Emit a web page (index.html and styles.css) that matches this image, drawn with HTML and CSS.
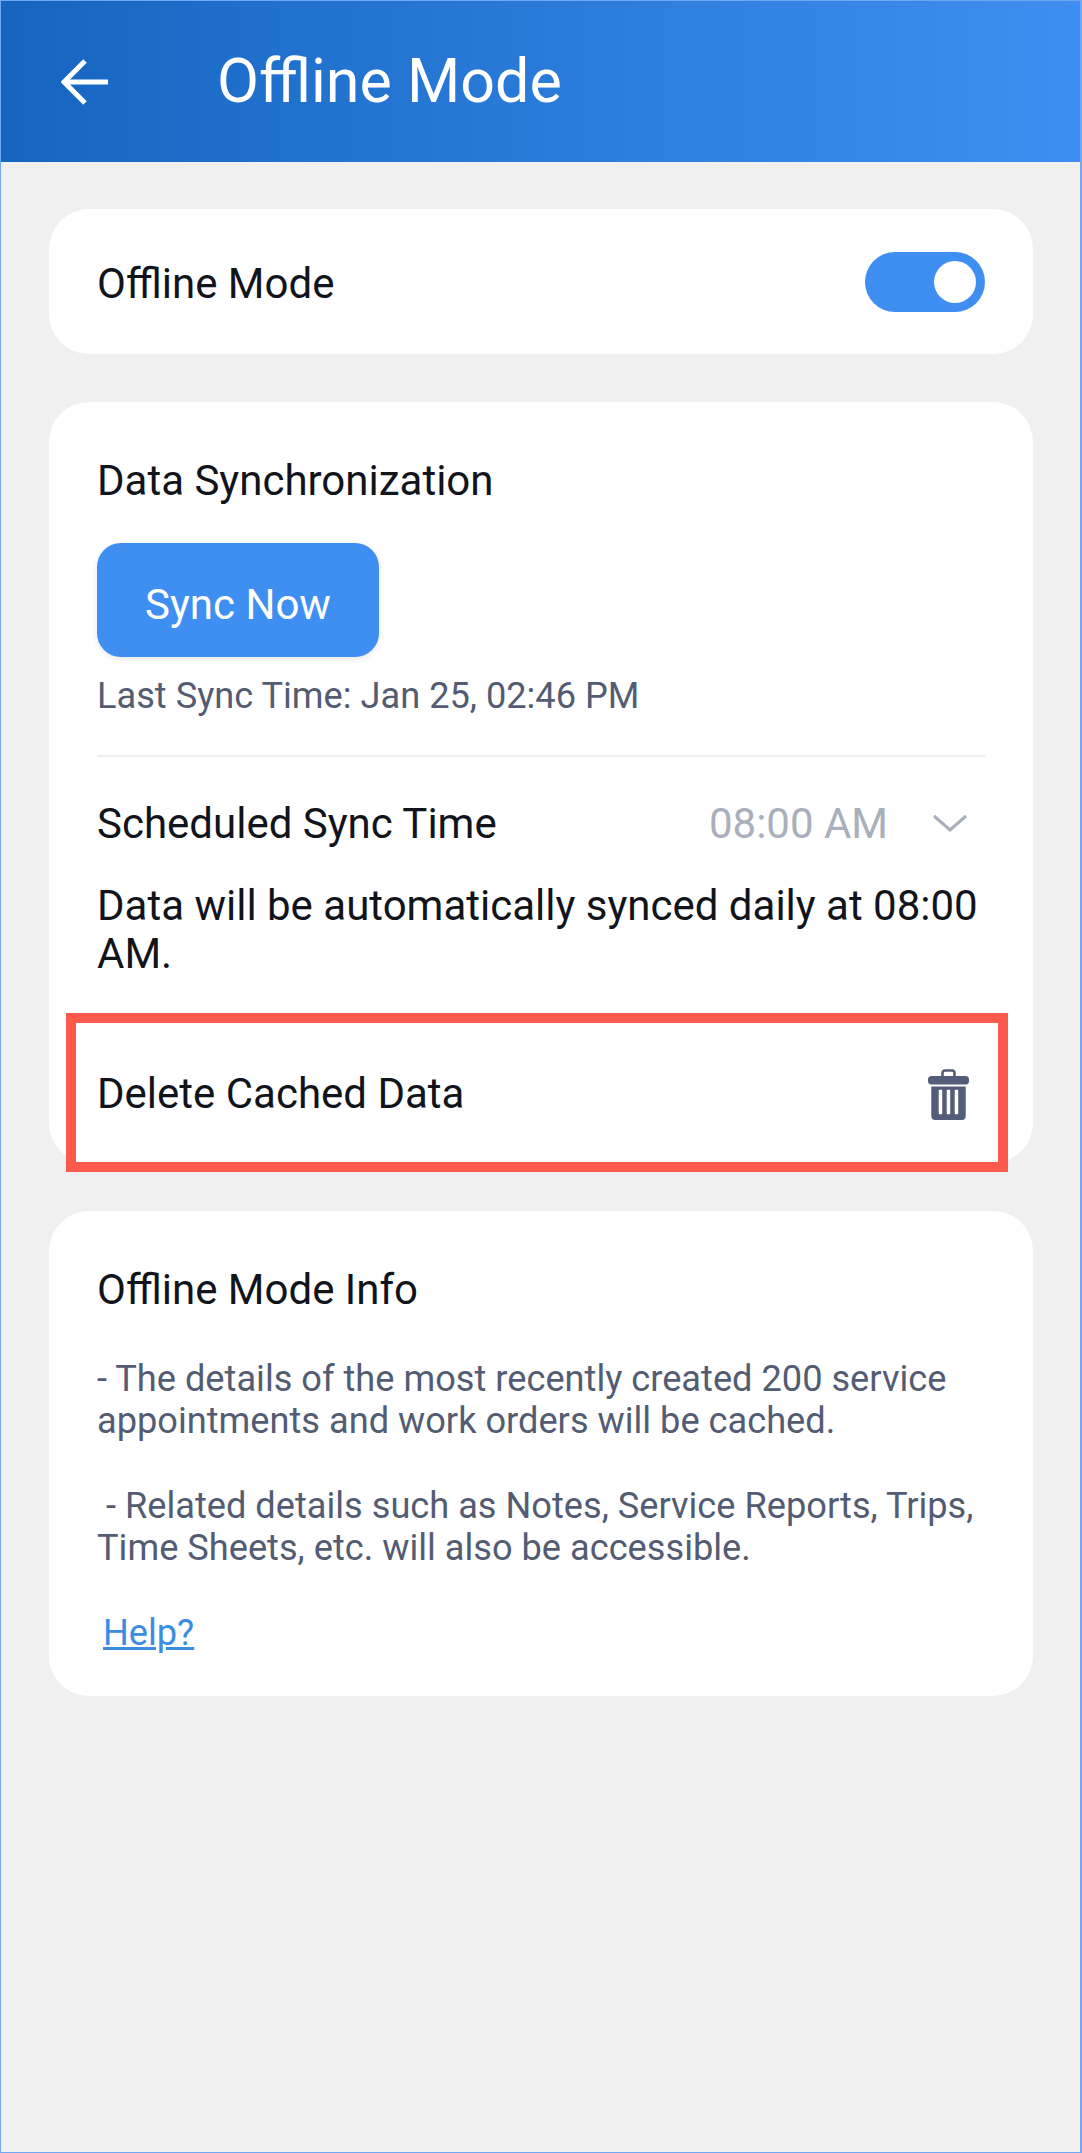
FILE: index.html
```html
<!DOCTYPE html>
<html>
<head>
  <meta charset="utf-8">
  <title>Offline Mode</title>
  <link rel="stylesheet" href="styles.css">
</head>
<body>
  <div class="screen">
    <header class="topbar">
      <svg class="back-icon" width="48" height="46" viewBox="0 0 48 46">
        <path d="M47 23H3M24 2L3 23L24 44" fill="none" stroke="#fff" stroke-width="5"/>
      </svg>
      <h1 class="topbar-title">Offline Mode</h1>
    </header>

    <main class="content">
      <section class="card toggle-card">
        <span class="label">Offline Mode</span>
        <span class="toggle"><span class="toggle-knob"></span></span>
      </section>

      <section class="card sync-card">
        <div class="label">Data Synchronization</div>
        <button class="sync-btn">Sync Now</button>
        <div class="last-sync">Last Sync Time: Jan 25, 02:46 PM</div>
        <div class="divider"></div>
        <div class="schedule-row">
          <span class="label">Scheduled Sync Time</span>
          <span class="schedule-time">08:00 AM</span>
          <svg class="chevron" width="36" height="19" viewBox="0 0 36 19">
            <path d="M2 2L18 16L34 2" fill="none" stroke="#a9afbb" stroke-width="3"/>
          </svg>
        </div>
        <p class="schedule-note">Data will be automatically synced daily at 08:00 AM.</p>
        <div class="delete-row">
          <span class="label">Delete Cached Data</span>
          <svg class="trash" width="41" height="51" viewBox="0 0 41 51">
            <path d="M14.5 8V4a2.5 2.5 0 0 1 2.5-2.5h7A2.5 2.5 0 0 1 26.500 4v4" fill="none" stroke="#535c78" stroke-width="2.6"/>
            <rect x="0" y="7" width="41" height="8.500" rx="3.500" fill="#535c78"/>
            <path d="M3.300 17.500h34.400V47a4 4 0 0 1-4 4H7.300a4 4 0 0 1-4-4z" fill="#535c78"/>
            <rect x="10.700" y="20.700" width="3.500" height="24.500" rx="1" fill="#fff"/>
            <rect x="18.700" y="20.700" width="3.500" height="24.500" rx="1" fill="#fff"/>
            <rect x="26.700" y="20.700" width="3.500" height="24.500" rx="1" fill="#fff"/>
          </svg>
          <div class="highlight"></div>
        </div>
      </section>

      <section class="card info-card">
        <div class="label">Offline Mode Info</div>
        <p class="info-text">- The details of the most recently created 200 service appointments and work orders will be cached.</p>
        <p class="info-text">&nbsp;- Related details such as Notes, Service Reports, Trips, Time Sheets, etc. will also be accessible.</p>
        <a class="help-link" href="#">Help?</a>
      </section>
    </main>
  </div>
</body>
</html>
```

FILE: styles.css
```css
html, body {
  margin: 0;
  padding: 0;
}
body {
  font-family: Roboto, "Liberation Sans", sans-serif;
  color: #12141c;
  background-color: #f0f0f0;
}
.screen {
  box-sizing: border-box;
  height: 2153px;
  border: 1px solid #6fa8f0;
  border-right-width: 2px;
  background-color: #f0f0f0;
  overflow: hidden;
}
.topbar {
  display: flex;
  align-items: center;
  height: 161px;
  padding-left: 60px;
  background: linear-gradient(90deg, #1565c0, #3f8ff2);
}
.topbar-title {
  margin: 0 0 2px 108px;
  font-size: 61px;
  font-weight: 400;
  color: #fff;
}
.content {
  display: flex;
  flex-direction: column;
  gap: 48px;
  padding: 47px 47px 0 48px;
}
.card {
  box-sizing: border-box;
  padding: 0 48px;
  border-radius: 40px;
  background-color: #fff;
}
.label {
  font-size: 42px;
  line-height: 48px;
}
.toggle-card {
  display: flex;
  align-items: center;
  justify-content: space-between;
  height: 145px;
}
.toggle-card .label {
  padding-top: 4px;
}
.toggle {
  display: flex;
  justify-content: flex-end;
  align-items: center;
  box-sizing: border-box;
  width: 120px;
  height: 60px;
  padding-right: 9px;
  border-radius: 30px;
  background-color: #3f8ff2;
}
.toggle-knob {
  width: 42px;
  height: 42px;
  border-radius: 50%;
  background-color: #fff;
}
.sync-card {
  height: 761px;
  padding-top: 55px;
}
.sync-btn {
  display: block;
  width: 282px;
  height: 114px;
  margin-top: 38px;
  padding: 8px 0 0;
  border: none;
  border-radius: 24px;
  font-family: inherit;
  font-size: 42px;
  color: #fff;
  background-color: #3f8ff2;
  box-shadow: 0 2px 6px rgba(0,0,0,0.1);
}
.last-sync {
  margin-top: 19px;
  font-size: 36.2px;
  line-height: 40px;
  color: #535c72;
}
.divider {
  height: 2px;
  margin-top: 39px;
  background-color: #eceef0;
}
.schedule-row {
  display: flex;
  align-items: center;
  margin-top: 42px;
}
.schedule-time {
  margin-left: auto;
  font-size: 42px;
  color: #a9afbb;
}
.chevron {
  margin-left: 44px;
  margin-right: 17px;
}
.schedule-note {
  margin: 34px 0 0;
  font-size: 42px;
  line-height: 48px;
}
.delete-row {
  position: relative;
  display: flex;
  align-items: center;
  justify-content: space-between;
  margin-top: 92px;
  height: 48px;
}
.trash {
  margin-right: 16px;
}
.highlight {
  position: absolute;
  top: -57px;
  bottom: -54px;
  left: -31px;
  right: -23px;
  border: 10px solid #fd5a4e;
}
.info-card {
  height: 485px;
  padding-top: 55px;
}
.info-text {
  margin: 0 0 43px;
  font-size: 36.2px;
  line-height: 42px;
  color: #535c72;
}
.label + .info-text {
  margin-top: 44px;
}
.help-link {
  margin-left: 6px;
  font-size: 36.2px;
  line-height: 42px;
  color: #3b8de0;
}
```
